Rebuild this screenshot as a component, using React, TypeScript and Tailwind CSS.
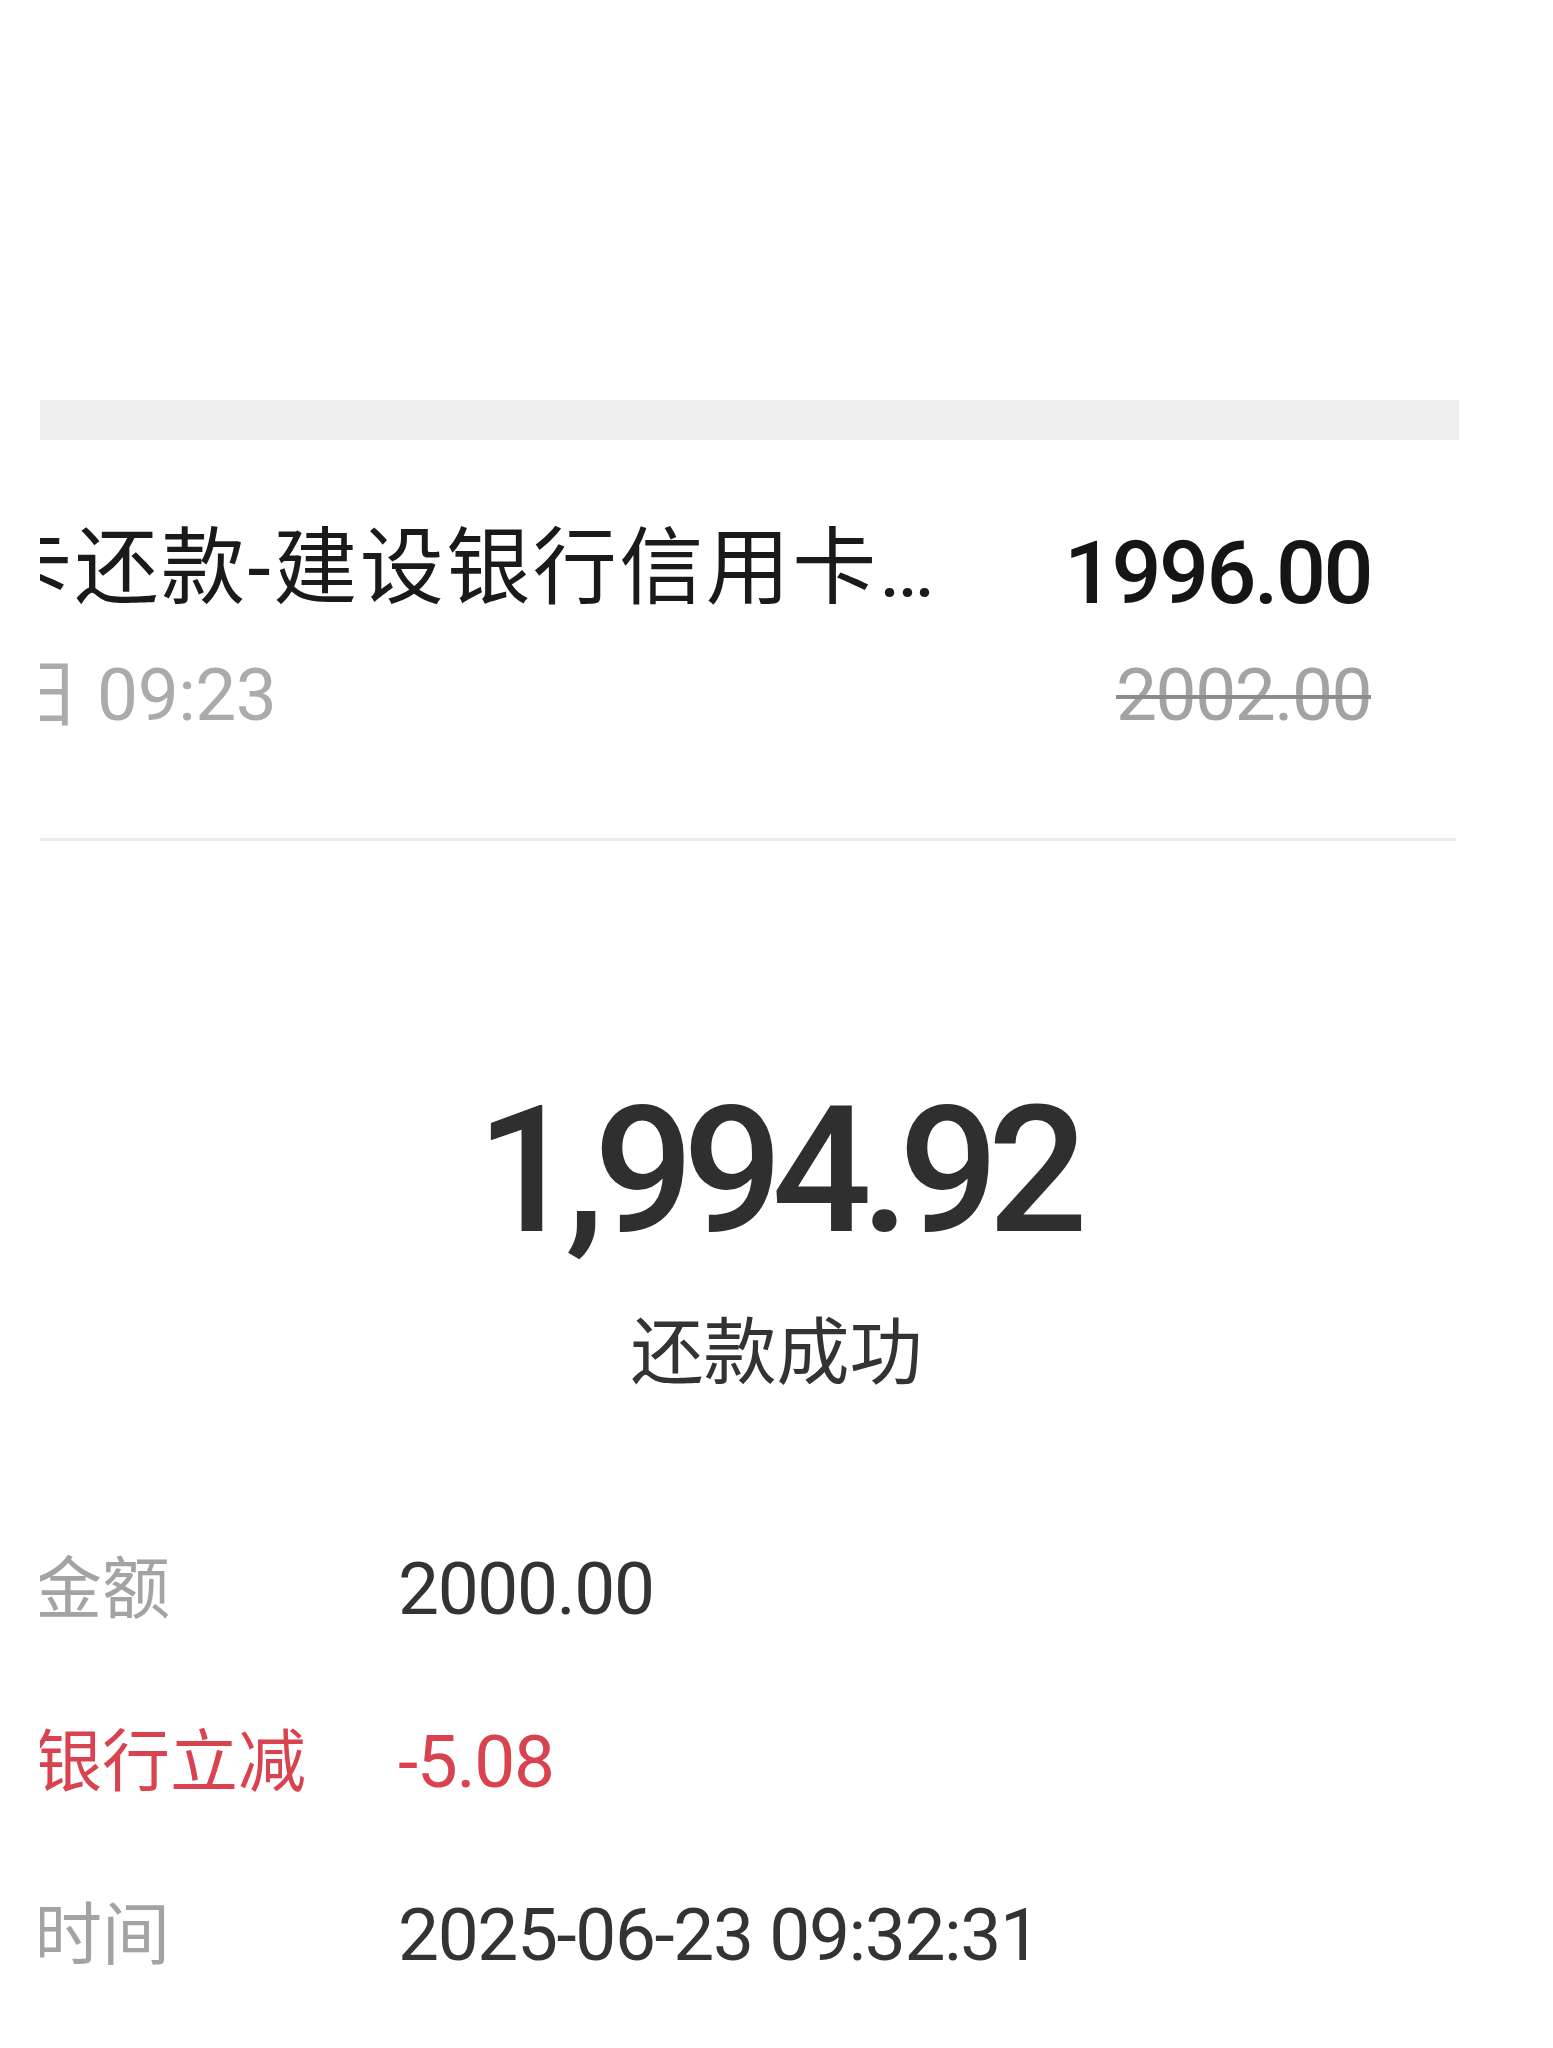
import React from "react";

const FONT = { fontFamily: 'Roboto, "Noto Sans CJK SC", sans-serif' };

type Row = { label: string; value: string; red?: boolean };

const rows: Row[] = [
  { label: "金额", value: "2000.00" },
  { label: "银行立减", value: "-5.08", red: true },
  { label: "时间", value: "2025-06-23 09:32:31" },
];

export default function App() {
  return (
    <div className="w-[1553px] min-h-[2048px] bg-white" style={FONT}>
      <div className="h-[400px]" />

      {/* grey separator from the list */}
      <div className="ml-[40px] w-[1419px] h-[40px] bg-[#efefef]" />

      {/* bill item */}
      <div className="ml-[40px] w-[1416px] overflow-hidden pr-[85px]">
        <div className="mt-[79px] h-[100px] flex items-center justify-between">
          <span className="-ml-[52px] text-[84px] leading-none tracking-[2.5px] text-[#1a1a1a] whitespace-nowrap">
            卡还款-建设银行信用卡…
          </span>
          <span className="mt-[8px] text-[88px] leading-none font-medium tracking-[-2.5px] text-[#151515]">
            1996.00
          </span>
        </div>
        <div className="mt-[36px] h-[80px] flex items-center justify-between">
          <span className="-ml-[33px] text-[73px] leading-none text-[#ababab] tracking-[-0.5px] whitespace-nowrap">
            日 09:23
          </span>
          <span className="text-[73px] leading-none text-[#a3a3a3] tracking-[-1.5px] line-through decoration-[4px] decoration-[#8c8c8c]">
            2002.00
          </span>
        </div>
      </div>

      <div className="ml-[40px] mt-[103px] w-[1416px] h-[3px] bg-[#ececec]" />

      {/* result */}
      <div className="mt-[242px] flex justify-center">
        <span className="text-[176px] leading-none font-medium tracking-[-11px] text-[#2f2f2f]">
          1,994.92
        </span>
      </div>
      <div className="mt-[58px] flex justify-center">
        <span className="text-[73px] leading-none text-[#333333]">还款成功</span>
      </div>

      {/* details */}
      <div className="ml-[40px] mt-[113px] w-[1416px] overflow-hidden">
        {rows.map((r) => (
          <div key={r.label} className="grid grid-cols-[358px_1fr] h-[173px] items-center">
            <span
              className={
                "-ml-[6px] text-[68px] leading-none whitespace-nowrap " +
                (r.red ? "text-[#d9434f]" : "text-[#a3a3a3]")
              }
            >
              {r.label}
            </span>
            <span
              className={
                "text-[73px] leading-none tracking-[-1.4px] whitespace-nowrap " +
                (r.red ? "text-[#d9434f]" : "text-[#333333]")
              }
            >
              {r.value}
            </span>
          </div>
        ))}
      </div>
    </div>
  );
}
